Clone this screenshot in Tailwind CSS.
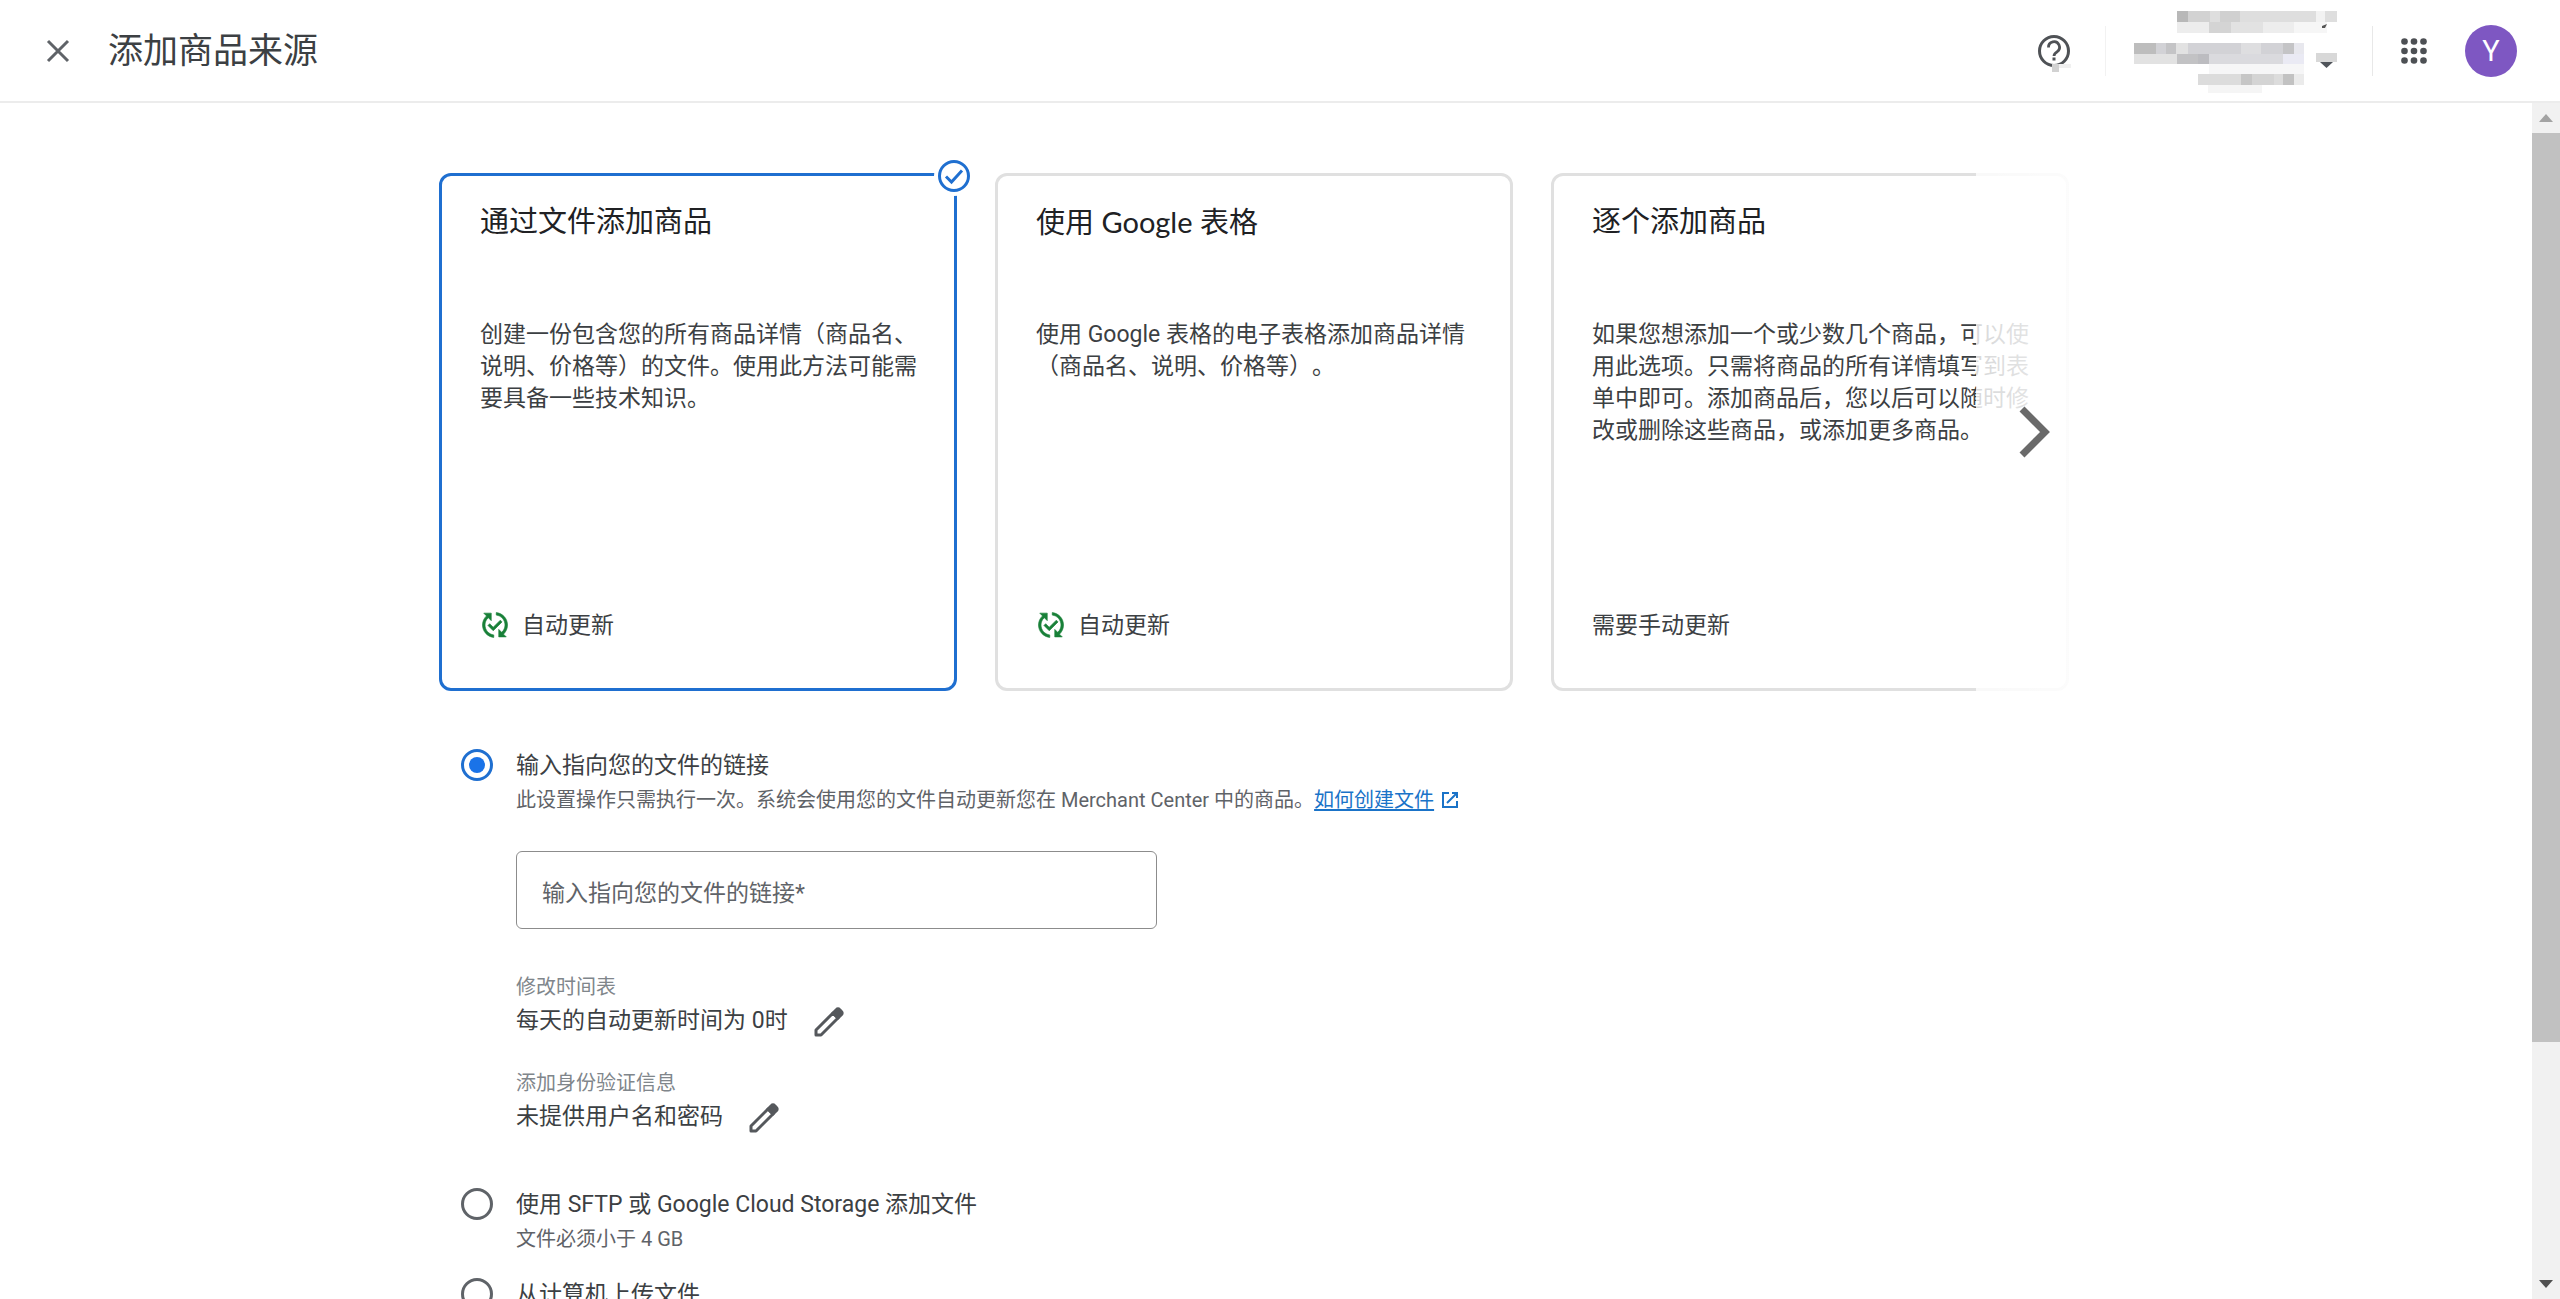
<!DOCTYPE html>
<html lang="zh-CN">
<head>
<meta charset="utf-8">
<title>添加商品来源</title>
<script src="https://cdn.jsdelivr.net/npm/@tailwindcss/browser@4"></script>
</head>
<body class="flex h-screen flex-col overflow-hidden bg-white font-['Roboto','Noto_Sans_CJK_SC',sans-serif] text-[23px] leading-8 text-[#3c4043] [text-spacing-trim:space-all]">

<header class="flex h-[103px] shrink-0 items-center border-b-2 border-[#ececec] pr-[43px] pl-[46px]">
  <button type="button" aria-label="关闭" class="flex size-6 items-center justify-center">
    <svg class="size-6" viewBox="0 0 24 24" fill="none" stroke="#5f6368" stroke-width="3"><path d="M2 2l20 20M22 2L2 22"/></svg>
  </button>
  <h1 class="ml-[38px] pt-0.5 text-[35px] leading-[48px]">添加商品来源</h1>

  <div class="ml-auto flex items-center">
    <button type="button" aria-label="帮助" class="h-[42px] w-8">
      <svg class="h-[42px] w-9" viewBox="0 0 36 42">
        <circle cx="16" cy="21" r="14.500" fill="none" stroke="#4f5256" stroke-width="3"/>
        <path d="M10.500 17.500a5.500 5.500 0 1 1 8.500 4.300c-2 1.400-3 2.200-3 4.200" fill="none" stroke="#4f5256" stroke-width="2.800"/>
        <rect x="14.500" y="27.500" width="3" height="3" fill="#4f5256"/>
        <rect x="14" y="34" width="19" height="4" fill="#f0f0f0"/>
        <rect x="14" y="34" width="7" height="8" fill="#d2d2d2"/>
      </svg>
    </button>
    <span class="ml-[35px] h-[50px] w-px bg-[#f2f2f2]"></span>
    <!-- account name, redacted -->
    <button type="button" aria-label="帐号" class="ml-7 h-[84px] w-[204px]">
      <svg class="h-[84px] w-[204px]" viewBox="0 0 204 84">
        <g>
          <rect x="43" y="2" width="160" height="11" fill="#dedede"/><rect x="43" y="2" width="11" height="11" fill="#b8b8b8"/>
          <rect x="54" y="2" width="22" height="11" fill="#d2d2d2"/><rect x="86" y="2" width="20" height="11" fill="#d0d0d0"/>
          <rect x="182" y="2" width="9" height="11" fill="#f2f2f2"/>
          <rect x="43" y="13" width="150" height="11" fill="#ededed"/><rect x="75" y="13" width="22" height="11" fill="#d4d4d4"/>
          <rect x="97" y="13" width="32" height="11" fill="#e2e2e2"/><rect x="160" y="13" width="33" height="11" fill="#f6f6f6"/>
          <path d="M188 17l5-2-2 4h-3z" fill="#555"/>
        </g>
        <g>
          <rect x="0" y="34" width="170" height="11" fill="#d2d2d6"/><rect x="0" y="34" width="22" height="11" fill="#bdbdbd"/>
          <rect x="32" y="34" width="10" height="11" fill="#c4c4c6"/><rect x="42" y="34" width="12" height="11" fill="#e2e2e2"/>
          <rect x="107" y="34" width="20" height="11" fill="#dedee0"/><rect x="149" y="34" width="11" height="11" fill="#c4c4c6"/><rect x="160" y="34" width="10" height="11" fill="#e8e8ee"/>
          <rect x="0" y="45" width="170" height="10" fill="#dadade"/><rect x="0" y="45" width="43" height="10" fill="#e2e2e2"/>
          <rect x="43" y="45" width="21" height="10" fill="#c2c2c4"/><rect x="64" y="45" width="11" height="10" fill="#bcbcc0"/><rect x="149" y="45" width="21" height="10" fill="#eaeaf4"/>
        </g>
        <g>
          <rect x="75" y="55" width="95" height="10" fill="#f6f6f7"/>
          <rect x="64" y="65" width="106" height="11" fill="#dcdcdc"/><rect x="107" y="65" width="11" height="11" fill="#c6c6c6"/><rect x="118" y="65" width="22" height="11" fill="#d4d4d4"/>
          <rect x="149" y="65" width="11" height="11" fill="#c2c2c2"/><rect x="160" y="65" width="10" height="11" fill="#ebebeb"/>
          <rect x="74" y="76" width="54" height="8" fill="#f5f5f5"/>
        </g>
        <rect x="182" y="44" width="21" height="9" fill="#d8d8d8"/>
        <path d="M186 53h13l-6.500 6z" fill="#50545a"/>
      </svg>
    </button>
    <span class="ml-[34px] h-[50px] w-px bg-[#e8e8e8]"></span>
    <button type="button" aria-label="Google 应用" class="ml-7 size-[26px]">
      <svg class="size-[26px]" viewBox="0 0 26 26" fill="#4d5054">
        <circle cx="3.500" cy="3.500" r="3.300"/><circle cx="13" cy="3.500" r="3.300"/><circle cx="22.500" cy="3.500" r="3.300"/>
        <circle cx="3.500" cy="13" r="3.300"/><circle cx="13" cy="13" r="3.300"/><circle cx="22.500" cy="13" r="3.300"/>
        <circle cx="3.500" cy="22.500" r="3.300"/><circle cx="13" cy="22.500" r="3.300"/><circle cx="22.500" cy="22.500" r="3.300"/>
      </svg>
    </button>
    <button type="button" class="ml-[38px] flex size-[52px] items-center justify-center rounded-full bg-[#7e57c2] text-[29px] text-white">Y</button>
  </div>
</header>

<div class="flex min-h-0 flex-1">
  <main class="min-w-0 flex-1 overflow-hidden pt-[70px]">
    <div class="mx-auto w-full max-w-[1654px]">

      <section class="relative flex gap-[38px]">
        <button type="button" aria-pressed="true" class="relative flex h-[518px] w-[518px] shrink-0 flex-col rounded-xl border-3 border-[#1f6fd0] pt-[26px] pr-[30px] pb-[46px] pl-[38px] text-left">
          <span class="absolute -top-5 -right-5 flex size-10 items-center justify-center rounded-full bg-white">
            <svg class="size-8" viewBox="0 0 32 32" fill="none" stroke="#1f6fd0" stroke-width="3"><circle cx="16" cy="16" r="14.500"/><path d="M8 16.500l5.500 5.500L24 10.500"/></svg>
          </span>
          <span class="text-[29px] leading-10 text-[#202124]">通过文件添加商品</span>
          <span class="mt-[77px]">创建一份包含您的所有商品详情（商品名、说明、价格等）的文件。使用此方法可能需要具备一些技术知识。</span>
          <span class="mt-auto flex items-start gap-3">
            <svg class="size-[30px]" viewBox="0 0 24 24" fill="#188038" stroke="#188038" stroke-width=".5"><path d="M17.660 9.530l-7.070 7.070-4.240-4.240 1.410-1.410 2.830 2.830 5.660-5.660 1.410 1.410zM4 12c0-2.330 1.020-4.420 2.620-5.880L9 8.500v-6H3l2.200 2.200C3.240 6.520 2 9.110 2 12c0 5.190 3.950 9.450 9 9.950v-2.020c-3.940-.49-7-3.860-7-7.930zm18 0c0-5.190-3.950-9.450-9-9.950v2.020c3.940.49 7 3.860 7 7.930 0 2.330-1.020 4.420-2.620 5.880L15 15.500v6h6l-2.200-2.200c1.960-1.820 3.200-4.410 3.200-7.300z"/></svg>
            自动更新
          </span>
        </button>

        <button type="button" aria-pressed="false" class="flex h-[518px] w-[518px] shrink-0 flex-col rounded-xl border-3 border-[#e0e0e0] pt-[26px] pr-[30px] pb-[46px] pl-[38px] text-left">
          <span class="font-['Lato','Noto_Sans_CJK_SC',sans-serif] text-[29px] leading-10 text-[#202124]">使用 Google 表格</span>
          <span class="mt-[77px]">使用 Google 表格的电子表格添加商品详情（商品名、说明、价格等）。</span>
          <span class="mt-auto flex items-start gap-3">
            <svg class="size-[30px]" viewBox="0 0 24 24" fill="#188038" stroke="#188038" stroke-width=".5"><path d="M17.660 9.530l-7.070 7.070-4.240-4.240 1.410-1.410 2.830 2.830 5.660-5.660 1.410 1.410zM4 12c0-2.330 1.020-4.420 2.620-5.880L9 8.500v-6H3l2.200 2.200C3.240 6.520 2 9.110 2 12c0 5.190 3.950 9.450 9 9.950v-2.020c-3.940-.49-7-3.860-7-7.930zm18 0c0-5.190-3.950-9.450-9-9.950v2.020c3.940.49 7 3.860 7 7.930 0 2.330-1.020 4.420-2.620 5.880L15 15.500v6h6l-2.200-2.200c1.960-1.820 3.200-4.410 3.200-7.300z"/></svg>
            自动更新
          </span>
        </button>

        <button type="button" aria-pressed="false" class="flex h-[518px] w-[518px] shrink-0 flex-col rounded-xl border-3 border-[#e0e0e0] pt-[26px] pr-[30px] pb-[46px] pl-[38px] text-left">
          <span class="text-[29px] leading-10 text-[#202124]">逐个添加商品</span>
          <span class="mt-[77px]">如果您想添加一个或少数几个商品，可以使用此选项。只需将商品的所有详情填写到表单中即可。添加商品后，您以后可以随时修改或删除这些商品，或添加更多商品。</span>
          <span class="mt-auto">需要手动更新</span>
        </button>

        <!-- fade with the "next" arrow at the end of the carousel -->
        <button type="button" aria-label="下一个" class="absolute inset-y-0 right-[21px] flex w-24 items-center justify-end bg-linear-to-r from-white/80 to-white/90 pr-[22px]">
          <svg class="h-[52px] w-[31px]" viewBox="0 0 31 52" fill="none" stroke="#6a6a6a" stroke-width="7"><path d="M3 3l23 23L3 49"/></svg>
        </button>
      </section>

      <form class="mt-[58px] pl-[22px]">
        <div class="flex gap-[23px]">
          <input id="src-link" type="radio" name="source" checked class="size-8 shrink-0 appearance-none rounded-full border-3 border-[#1f6fd0] bg-[#1a73e8] bg-clip-content p-[5px]">
          <div>
            <label for="src-link" class="block leading-[34px]">输入指向您的文件的链接</label>
            <p class="mt-[3px] flex items-center text-[20px] leading-7 text-[#5f6368]">
              此设置操作只需执行一次。系统会使用您的文件自动更新您在 Merchant Center 中的商品。
              <a href="#" class="flex items-center gap-2 text-[#1a73c8]"><span class="underline underline-offset-2">如何创建文件</span>
                <svg class="size-4" viewBox="0 0 16 16" fill="none" stroke="currentColor" stroke-width="2"><path d="M7 1H1v14h14V9M10 1h5v5M15 1L5 11"/></svg>
              </a>
            </p>
            <input type="text" aria-label="输入指向您的文件的链接" placeholder="输入指向您的文件的链接*" class="mt-[37px] block h-[78px] w-[641px] rounded-md border border-[#8c8c8c] px-[25px] pt-1.5 placeholder:text-[#5f6368]">

            <div class="mt-11 flex flex-col gap-8">
              <div>
                <div class="text-[20px] leading-7 text-[#80868b]">修改时间表</div>
                <div class="mt-1 flex items-center gap-6">每天的自动更新时间为 0时
                  <button type="button" aria-label="修改时间表" class="size-8">
                    <svg class="size-8" viewBox="0 0 32 32" fill="none" stroke="#55585c" stroke-width="3" stroke-linejoin="round"><path d="M4 30v-5L21 8l5 5L9 30z"/><path d="M21 8l3.500-3.500a2 2 0 0 1 3 0l2 2a2 2 0 0 1 0 3L26 13z" fill="#55585c"/></svg>
                  </button>
                </div>
              </div>
              <div>
                <div class="text-[20px] leading-7 text-[#80868b]">添加身份验证信息</div>
                <div class="mt-1 flex items-center gap-6">未提供用户名和密码
                  <button type="button" aria-label="修改身份验证信息" class="size-8">
                    <svg class="size-8" viewBox="0 0 32 32" fill="none" stroke="#55585c" stroke-width="3" stroke-linejoin="round"><path d="M4 30v-5L21 8l5 5L9 30z"/><path d="M21 8l3.500-3.500a2 2 0 0 1 3 0l2 2a2 2 0 0 1 0 3L26 13z" fill="#55585c"/></svg>
                  </button>
                </div>
              </div>
            </div>
          </div>
        </div>

        <div class="mt-[55px] flex gap-[23px]">
          <input id="src-sftp" type="radio" name="source" class="size-8 shrink-0 appearance-none rounded-full border-3 border-[#5f6368]">
          <div>
            <label for="src-sftp" class="block leading-[34px]">使用 SFTP 或 Google Cloud Storage 添加文件</label>
            <p class="mt-[3px] text-[20px] leading-7 text-[#5f6368]">文件必须小于 4 GB</p>
          </div>
        </div>

        <div class="mt-[25px] flex gap-[23px]">
          <input id="src-upload" type="radio" name="source" class="size-8 shrink-0 appearance-none rounded-full border-3 border-[#5f6368]">
          <label for="src-upload" class="block leading-[34px]">从计算机上传文件</label>
        </div>
      </form>
    </div>
  </main>

  <!-- scroll bar -->
  <div aria-hidden="true" class="flex w-7 shrink-0 flex-col bg-[#f1f1f1]">
    <div class="flex h-[30px] items-center justify-center"><svg class="h-2 w-3.5" viewBox="0 0 14 8"><path d="M7 0l7 8H0z" fill="#a3a3a3"/></svg></div>
    <div class="h-[76%] bg-[#c1c1c1]"></div>
    <div class="mt-auto flex h-[30px] items-center justify-center"><svg class="h-2 w-3.5" viewBox="0 0 14 8"><path d="M0 0h14L7 8z" fill="#505050"/></svg></div>
  </div>
</div>
</body>
</html>
